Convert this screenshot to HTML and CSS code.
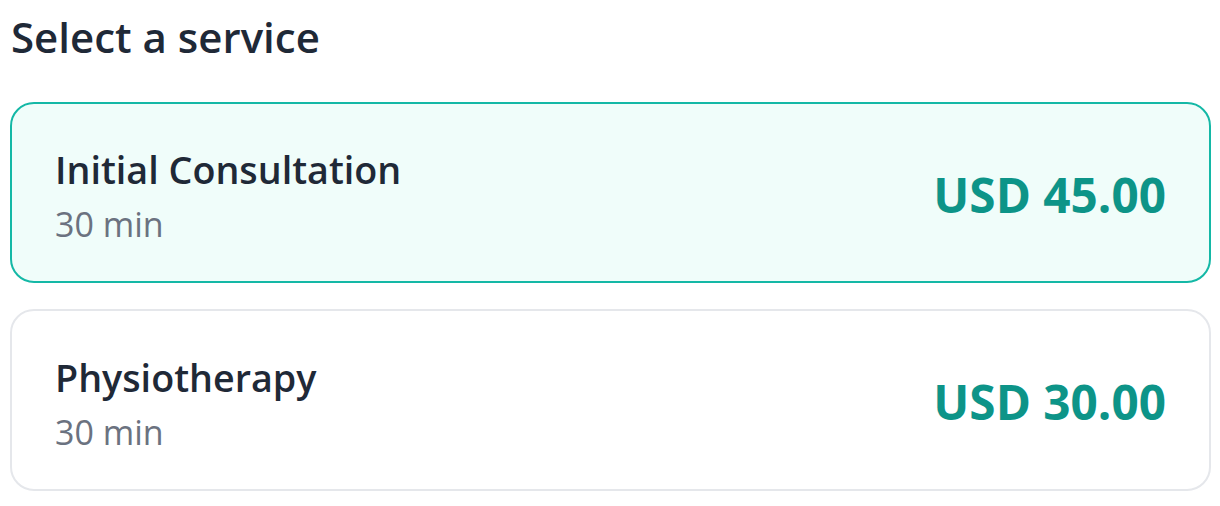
FILE: index.html
```html
<!DOCTYPE html>
<html>
<head>
<meta charset="utf-8">
<link rel="stylesheet" href="styles.css">
</head>
<body>
<main class="page">
  <h1 class="heading">Select a service</h1>
  <div class="list">
    <div class="card card-selected">
      <div class="info">
        <div class="name">Initial Consultation</div>
        <div class="duration">30 min</div>
      </div>
      <div class="price">USD 45.00</div>
    </div>
    <div class="card">
      <div class="info">
        <div class="name">Physiotherapy</div>
        <div class="duration">30 min</div>
      </div>
      <div class="price">USD 30.00</div>
    </div>
  </div>
</main>
</body>
</html>
```
FILE: styles.css
```css
html, body {
  margin: 0;
  padding: 0;
  background: #ffffff;
}
body {
  font-family: "Open Sans", "Noto Sans", sans-serif;
}
.page {
  padding: 8px 9px 0 10px;
}
.heading {
  margin: 0;
  font-size: 42px;
  font-weight: 600;
  color: #1f2937;
  line-height: 58px;
  padding-left: 1px;
}
.list {
  display: flex;
  flex-direction: column;
  gap: 26px;
  margin-top: 36px;
}
.card {
  display: flex;
  align-items: center;
  justify-content: space-between;
  height: 181px;
  box-sizing: border-box;
  padding: 4px 43px 0;
  border: 2px solid #e5e7eb;
  border-radius: 24px;
  background: #ffffff;
}
.card + .card {
  height: 182px;
}
.card-selected {
  border-color: #14b8a6;
  background: #f0fdfa;
}
.info {
  display: flex;
  flex-direction: column;
  padding-top: 5px;
}
.name {
  font-size: 37.7px;
  font-weight: 600;
  color: #1f2937;
  line-height: 54px;
}
.duration {
  font-size: 34px;
  color: #6b7280;
  line-height: 54px;
}
.price {
  font-size: 47.7px;
  font-weight: 700;
  color: #0d9488;
  line-height: 60px;
}
```
